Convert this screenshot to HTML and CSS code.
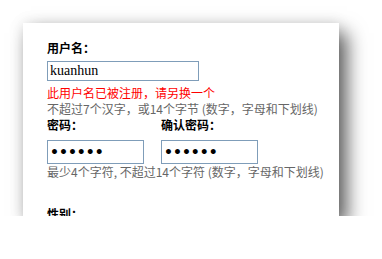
FILE: index.html
```
<!DOCTYPE html>
<html>
<head>
<meta charset="utf-8">
<link rel="stylesheet" href="styles.css">
</head>
<body>
<div class="card">
  <div class="label">用户名：</div>
  <input class="field field-wide" type="text" value="kuanhun">
  <div class="error">此用户名已被注册，请另换一个</div>
  <div class="hint">不超过7个汉字，或14个字节 (数字，字母和下划线)</div>
  <div class="pair">
    <div class="col">
      <div class="label">密码：</div>
      <input class="field field-pw" type="password" value="123456">
    </div>
    <div class="col">
      <div class="label">确认密码：</div>
      <input class="field field-pw" type="password" value="123456">
    </div>
  </div>
  <div class="hint">最少4个字符, 不超过14个字符 (数字，字母和下划线)</div>
  <div class="label gender">性别：</div>
</div>
</body>
</html>
```
FILE: styles.css
```
html, body {
  margin: 0;
  padding: 0;
  background: #fff;
}
body {
  padding: 23px 0 0 23px;
  font-family: "Noto Sans CJK SC", "DejaVu Sans", sans-serif;
  font-size: 12px;
}
.card {
  width: 316px;
  height: 193px;
  box-sizing: border-box;
  padding: 17px 0 0 24px;
  background: #fff;
  overflow: hidden;
  box-shadow: 8px 10px 18px rgba(0,0,0,0.62), 0 0 14px rgba(0,0,0,0.10);
}
.label {
  font-weight: bold;
  line-height: 16px;
  color: #000;
}
.field {
  display: block;
  box-sizing: border-box;
  margin: 5px 0 0 0;
  border: 1px solid #7f9db9;
  background: #fff;
  padding: 0 2px;
  outline: none;
  font-family: "Liberation Serif", serif;
  font-size: 14px;
  color: #000;
}
.field-wide {
  width: 152px;
  height: 20px;
}
.field-pw {
  width: 97px;
  height: 24px;
  margin-top: 7px;
  font-family: "DejaVu Sans", sans-serif;
  font-size: 14px;
  font-weight: bold;
}
.error {
  margin-top: 4px;
  line-height: 16px;
  color: #f00;
}
.hint {
  line-height: 16px;
  color: #666;
}
.pair {
  display: flex;
  gap: 17px;
}
.gender {
  margin-top: 26px;
}
```
